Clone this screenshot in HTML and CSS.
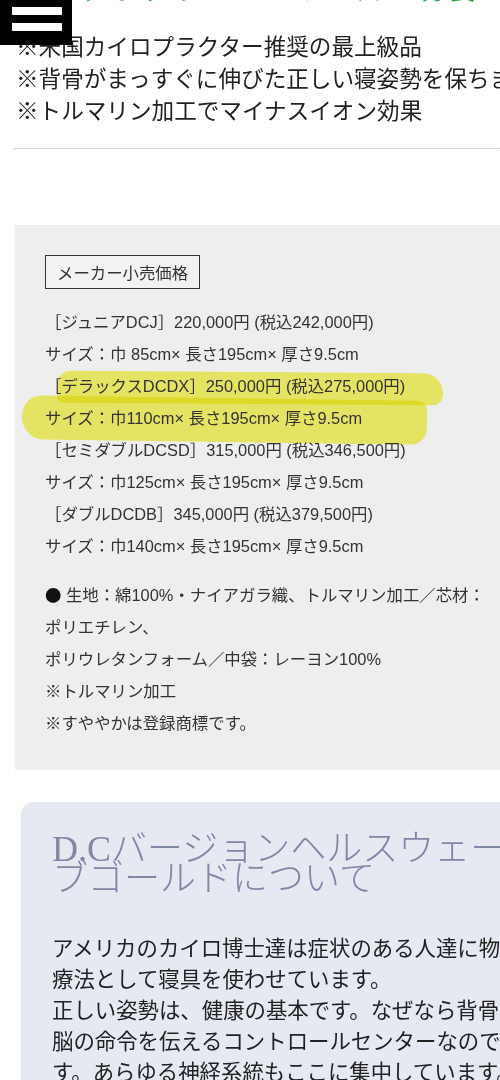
FILE: index.html
```html
<!DOCTYPE html>
<html lang="ja">
<head>
<meta charset="utf-8">
<title>D.Cバージョンヘルスウェーブゴールド</title>
<link rel="stylesheet" href="styles.css">
</head>
<body>
<div class="menu-btn" aria-label="メニュー"><span class="bar"></span><span class="bar"></span></div>
<div class="page">
  <div class="green-head"><span>すやすやＤＣシリーズの特長</span></div>
  <div class="intro">
    <p>※米国カイロプラクター推奨の最上級品</p>
    <p>※背骨がまっすぐに伸びた正しい寝姿勢を保ちます。</p>
    <p>※トルマリン加工でマイナスイオン効果</p>
  </div>
  <div class="dots"></div>

  <section class="price-box">
    <div class="label">メーカー小売価格</div>
    <div class="prices">
      <p>［ジュニアDCJ］220,000円 (税込242,000円)</p>
      <p>サイズ：巾 85cm× 長さ195cm× 厚さ9.5cm</p>
      <div class="marked">
        <p>［デラックスDCDX］250,000円 (税込275,000円)</p>
        <p>サイズ：巾110cm× 長さ195cm× 厚さ9.5cm</p>
      </div>
      <p>［セミダブルDCSD］315,000円 (税込346,500円)</p>
      <p>サイズ：巾125cm× 長さ195cm× 厚さ9.5cm</p>
      <p>［ダブルDCDB］345,000円 (税込379,500円)</p>
      <p>サイズ：巾140cm× 長さ195cm× 厚さ9.5cm</p>
    </div>
    <div class="material">
      <p><span class="bullet">●</span> 生地：綿100%・ナイアガラ織、トルマリン加工／芯材：</p>
      <p>ポリエチレン、</p>
      <p>ポリウレタンフォーム／中袋：レーヨン100%</p>
      <p>※トルマリン加工</p>
      <p>※すややかは登録商標です。</p>
    </div>
  </section>

  <section class="card">
    <h2>D.Cバージョンヘルスウェーブゴールドについて</h2>
    <p class="body">アメリカのカイロ博士達は症状のある人達に物理療法として寝具を使わせています。<br>正しい姿勢は、健康の基本です。なぜなら背骨は脳の命令を伝えるコントロールセンターなのです。あらゆる神経系統もここに集中しています。</p>
  </section>
</div>
</body>
</html>
```

FILE: styles.css
```css
html, body {
  margin: 0;
  padding: 0;
}
body {
  width: 500px;
  height: 1080px;
  overflow: hidden;
  background: #ffffff;
  font-family: "Noto Sans CJK JP", "Noto Sans", sans-serif;
  color: #222222;
}
p { margin: 0; }

.menu-btn {
  position: fixed;
  top: 0;
  left: 0;
  width: 72px;
  height: 45px;
  background: #000000;
  z-index: 10;
}
.menu-btn .bar {
  position: absolute;
  left: 12px;
  width: 50px;
  height: 8px;
  background: #ffffff;
}
.menu-btn .bar:first-child { top: 7px; }
.menu-btn .bar:last-child { top: 23px; }

.page {
  width: 600px;
}

.green-head {
  height: 5px;
  overflow: hidden;
  padding-left: 78px;
}
.green-head span {
  display: block;
  margin-top: -27px;
  font-size: 27px;
  line-height: 30px;
  color: #2fa84f;
  font-weight: bold;
  letter-spacing: 4px;
  white-space: nowrap;
}

.intro {
  margin-top: 25px;
  padding-left: 16px;
  font-size: 22.6px;
  line-height: 32px;
  white-space: nowrap;
  color: #222;
}

.dots {
  margin: 22px 0 0 14px;
  border-top: 1px dotted #b9b9b9;
}

.price-box {
  margin: 76px 0 0 15px;
  width: 560px;
  background: #eeeeee;
  padding: 30px 0 31px 30px;
  box-sizing: border-box;
  font-family: "Liberation Sans", "Noto Sans CJK JP", sans-serif;
  font-size: 16.4px;
  line-height: 32px;
  color: #333333;
  white-space: nowrap;
}
.label {
  display: inline-block;
  border: 1px solid #333;
  height: 32px;
  line-height: 32px;
  padding: 0 11px;
  background: #f2f2f2;
  font-family: "Noto Sans CJK JP", sans-serif;
}
.prices {
  margin-top: 17px;
}
.marked {
  position: relative;
}
.marked::before,
.marked::after {
  content: "";
  position: absolute;
  background: #f6f46a;
  mix-blend-mode: multiply;
  z-index: 0;
}
.marked::before {
  left: 12px;
  top: 2px;
  width: 386px;
  height: 32px;
  border-radius: 14px 20px 10px 6px;
  transform: rotate(0.4deg);
}
.marked::after {
  left: -23px;
  top: 28px;
  width: 405px;
  height: 44px;
  border-radius: 20px 10px 16px 22px;
  transform: rotate(0.8deg);
}
.marked p {
  position: relative;
  z-index: 1;
}

.material {
  margin-top: 16px;
}
.bullet {
  font-family: "Noto Sans CJK JP", sans-serif;
  color: #111;
}

.card {
  margin: 32px 0 0 21px;
  width: 540px;
  background: #e6e9f2;
  border-radius: 12px;
  padding: 32px 0 40px 31px;
  box-sizing: border-box;
}
.card h2 {
  margin: 0;
  width: 480px;
  font-family: "Liberation Serif", "Noto Sans CJK JP", serif;
  font-weight: 300;
  font-size: 36px;
  line-height: 30px;
  color: #8088a6;
  letter-spacing: 0;
}
.card .body {
  margin-top: 37px;
  font-size: 21.4px;
  line-height: 31px;
  width: calc(22em + 2px);
  color: #222;
}
```
